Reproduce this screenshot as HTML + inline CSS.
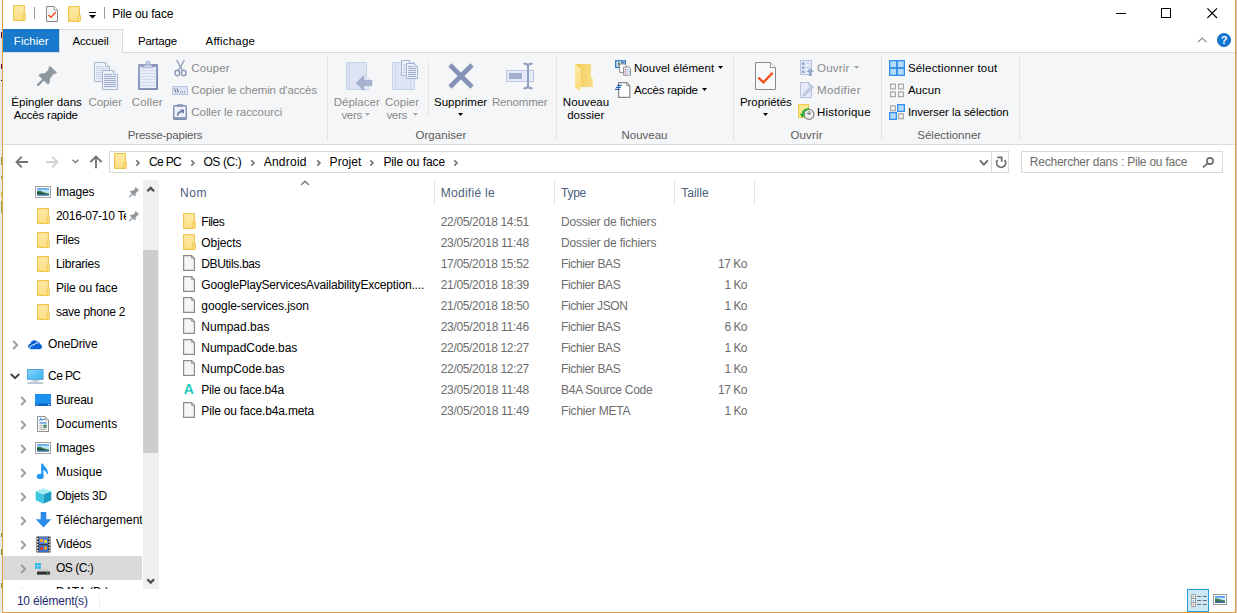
<!DOCTYPE html>
<html lang="fr"><head><meta charset="utf-8"><title>Pile ou face</title>
<style>
html,body{margin:0;padding:0;background:#fff;overflow:hidden}
body{width:1237px;height:613px;position:relative;font-family:'Liberation Sans', sans-serif;font-size:12px}
.a{position:absolute;display:block}
.t{position:absolute;white-space:pre}
</style></head><body>
<div class="a" style="left:0px;top:0px;width:2px;height:613px;background:#e9e9e9;"></div>
<div class="a" style="left:0px;top:0px;width:2px;height:29px;background:#f6f6f6;"></div>
<div class="a" style="left:1px;top:32px;width:1px;height:6px;background:#5c0f4e;"></div>
<div class="a" style="left:1px;top:64px;width:1px;height:5px;background:#5c0f4e;"></div>
<div class="a" style="left:1px;top:80px;width:1px;height:1px;background:#111;"></div>
<div class="a" style="left:1px;top:157px;width:1px;height:8px;background:#8f9a2a;"></div>
<div class="a" style="left:1px;top:176px;width:1px;height:3px;background:#b9a52e;"></div>
<div class="a" style="left:1px;top:192px;width:1px;height:5px;background:#d9c23a;"></div>
<div class="a" style="left:1px;top:201px;width:1px;height:12px;background:#9aa83a;"></div>
<div class="a" style="left:1px;top:533px;width:1px;height:4px;background:#6f8f2f;"></div>
<div class="a" style="left:1px;top:549px;width:1px;height:6px;background:#6f8f2f;"></div>
<div class="a" style="left:1px;top:583px;width:1px;height:5px;background:#8f9a2a;"></div>
<div class="a" style="left:2px;top:0px;width:1px;height:613px;background:#dfa146;"></div>
<div class="a" style="left:1235px;top:0px;width:1px;height:613px;background:#dfa146;"></div>
<div class="a" style="left:1236px;top:0px;width:1px;height:613px;background:#d3c6aa;"></div>
<div class="a" style="left:2px;top:612px;width:1234px;height:1px;background:#dfa146;"></div>
<svg class="a" style="left:13px;top:5px" width="13" height="16" viewBox="0 0 13 16"><defs><linearGradient id="fg" x1="0" y1="0" x2="0" y2="1"><stop offset="0" stop-color="#fdeaa8"/><stop offset="1" stop-color="#fbdf85"/></linearGradient></defs>
<rect x="0.600" y="0.600" width="10.800" height="14.800" fill="url(#fg)" stroke="#f0c850" stroke-width="1.200"/>
<rect x="9.900" y="8.900" width="2.500" height="6.500" rx="0.7" fill="#fbe08c" stroke="#eec548" stroke-width="1"/></svg>
<div class="a" style="left:34px;top:7px;width:1px;height:12px;background:#9a9a9a;"></div>
<svg class="a" style="left:46px;top:6px" width="12" height="16" viewBox="0 0 12 16"><path d="M0.5 0.5 H8 L11.5 4 V15.5 H0.5 Z" fill="#f6f7f9" stroke="#8a8a8a"/>
<path d="M8 0.5 V4 H11.5" fill="#fff" stroke="#8a8a8a" stroke-width="0.9"/>
<path d="M2.4 9 L5 11.2 L9.8 6.2" fill="none" stroke="#f0531c" stroke-width="1.5"/></svg>
<svg class="a" style="left:68px;top:6px" width="13" height="16" viewBox="0 0 13 16"><defs><linearGradient id="fg" x1="0" y1="0" x2="0" y2="1"><stop offset="0" stop-color="#fdeaa8"/><stop offset="1" stop-color="#fbdf85"/></linearGradient></defs>
<rect x="0.600" y="0.600" width="10.800" height="14.800" fill="url(#fg)" stroke="#f0c850" stroke-width="1.200"/>
<rect x="9.900" y="8.900" width="2.500" height="6.500" rx="0.7" fill="#fbe08c" stroke="#eec548" stroke-width="1"/></svg>
<svg class="a" style="left:88px;top:11px" width="9" height="8" viewBox="0 0 9 8"><rect x="1" y="1" width="7" height="1" fill="#000"/><path d="M1 4 H8 L4.5 7.5 Z" fill="#000"/></svg>
<div class="a" style="left:104px;top:7px;width:1px;height:12px;background:#9a9a9a;"></div>
<span class="t " style="left:112.30px;top:7px;line-height:14px;font-size:12px;color:#000;letter-spacing:-0.143px;">Pile ou face</span>
<svg class="a" style="left:1110px;top:0px" width="125" height="30" viewBox="0 0 125 30"><g stroke="#000" stroke-width="1" fill="none" shape-rendering="crispEdges">
<line x1="6" y1="13.5" x2="16" y2="13.5"/>
<rect x="51.5" y="8.5" width="9" height="9"/></g>
<path d="M97.4 8.4 L107 18 M107 8.4 L97.4 18" stroke="#000" stroke-width="1.1" fill="none"/></svg>
<div class="a" style="left:3px;top:29px;width:56px;height:23px;background:#1979ca;"></div>
<span class="t " style="left:13.80px;top:35px;line-height:12px;font-size:11.5px;color:#fff;letter-spacing:0.055px;">Fichier</span>
<div class="a" style="left:3px;top:52px;width:1232px;height:92px;background:#f5f6f7;"></div>
<div class="a" style="left:3px;top:52px;width:1232px;height:1px;background:#dadbdc;"></div>
<div class="a" style="left:3px;top:144px;width:1232px;height:1px;background:#dadbdc;"></div>
<div class="a" style="left:59px;top:29px;width:64px;height:24px;background:#f5f6f7;border:1px solid #dadbdc;box-sizing:border-box;border-bottom:none;"></div>
<span class="t " style="left:72.40px;top:35px;line-height:12px;font-size:11.5px;color:#000;letter-spacing:-0.125px;">Accueil</span>
<span class="t " style="left:137.90px;top:35px;line-height:12px;font-size:11.5px;color:#000;letter-spacing:-0.169px;">Partage</span>
<span class="t " style="left:205.50px;top:35px;line-height:12px;font-size:11.5px;color:#000;letter-spacing:0.206px;">Affichage</span>
<svg class="a" style="left:1195px;top:32px" width="40" height="18" viewBox="0 0 40 18"><path d="M3 10.200 L7.200 6 L11.400 10.200" stroke="#8c8c8c" stroke-width="1.100" fill="none"/>
<circle cx="29" cy="8" r="6.600" fill="#1177d3" stroke="#0b62b8" stroke-width="0.8"/></svg>
<span class="t " style="left:1220.70px;top:34px;line-height:12px;font-size:11px;color:#fff;letter-spacing:0.000px;font-weight:700;">?</span>
<div class="a" style="left:327px;top:55px;width:1px;height:85px;background:#e2e3e4;"></div>
<div class="a" style="left:556px;top:55px;width:1px;height:85px;background:#e2e3e4;"></div>
<div class="a" style="left:733px;top:55px;width:1px;height:85px;background:#e2e3e4;"></div>
<div class="a" style="left:881px;top:55px;width:1px;height:85px;background:#e2e3e4;"></div>
<div class="a" style="left:1019px;top:55px;width:1px;height:85px;background:#e2e3e4;"></div>
<div class="a" style="left:428px;top:62px;width:1px;height:55px;background:#e2e3e4;"></div>
<svg class="a" style="left:37.3px;top:65.6px" width="21" height="21" viewBox="0 0 21 21"><g transform="scale(1.0) translate(-7.300,-7.600)" fill="#8d979e" stroke="#8d979e" stroke-width="0.6" stroke-linejoin="round"><path d="M20.3 7.900 L27 14.400 L23.500 15.600 L20 20.300 L19.700 24.700 L18.200 25.800 L9.100 17 L10.300 15.600 L15.300 15 L19.100 11.200 L19.400 8.800 Z"/><path d="M8.400 26.500 L14 20.900" stroke-width="2.300" stroke-linecap="round" fill="none"/></g></svg>
<span class="t " style="left:11.30px;top:96px;line-height:12px;font-size:11.5px;color:#000;letter-spacing:0.021px;">Épingler dans</span>
<span class="t " style="left:13.70px;top:109px;line-height:12px;font-size:11.5px;color:#000;letter-spacing:-0.199px;">Accès rapide</span>
<svg class="a" style="left:94px;top:62px" width="24" height="28" viewBox="0 0 24 28"><path d="M0.5 0.5 H11.5 L15.5 4.5 V19.5 H0.5 Z" fill="#edf2fb" stroke="#a6b3d1"/><path d="M11.5 0.5 V4.5 H15.5" fill="#edf2fb" stroke="#a6b3d1" stroke-width="0.9"/><line x1="2" y1="4.5" x2="10" y2="4.5" stroke="#c9d3e8" stroke-width="1.1"/><line x1="2" y1="6.5" x2="14" y2="6.5" stroke="#c9d3e8" stroke-width="1.1"/><line x1="2" y1="8.5" x2="14" y2="8.5" stroke="#c9d3e8" stroke-width="1.1"/><line x1="2" y1="10.5" x2="14" y2="10.5" stroke="#c9d3e8" stroke-width="1.1"/><line x1="2" y1="12.5" x2="14" y2="12.5" stroke="#c9d3e8" stroke-width="1.1"/><line x1="2" y1="14.5" x2="14" y2="14.5" stroke="#c9d3e8" stroke-width="1.1"/><line x1="2" y1="16.5" x2="14" y2="16.5" stroke="#c9d3e8" stroke-width="1.1"/><path d="M8.5 8.5 H19.5 L23.5 12.5 V27.5 H8.5 Z" fill="#edf2fb" stroke="#a6b3d1"/><path d="M19.5 8.5 V12.5 H23.5" fill="#edf2fb" stroke="#a6b3d1" stroke-width="0.9"/><line x1="10" y1="12.5" x2="18" y2="12.5" stroke="#a3b0cd" stroke-width="1.1"/><line x1="10" y1="14.5" x2="22" y2="14.5" stroke="#a3b0cd" stroke-width="1.1"/><line x1="10" y1="16.5" x2="22" y2="16.5" stroke="#a3b0cd" stroke-width="1.1"/><line x1="10" y1="18.5" x2="22" y2="18.5" stroke="#a3b0cd" stroke-width="1.1"/><line x1="10" y1="20.5" x2="22" y2="20.5" stroke="#a3b0cd" stroke-width="1.1"/><line x1="10" y1="22.5" x2="22" y2="22.5" stroke="#a3b0cd" stroke-width="1.1"/><line x1="10" y1="24.5" x2="22" y2="24.5" stroke="#a3b0cd" stroke-width="1.1"/></svg>
<span class="t " style="left:88.40px;top:96px;line-height:12px;font-size:11.5px;color:#8a8a8a;letter-spacing:-0.048px;">Copier</span>
<svg class="a" style="left:138px;top:60px" width="20" height="30" viewBox="0 0 20 30"><defs><linearGradient id="cb" x1="0" y1="0" x2="1" y2="1"><stop offset="0" stop-color="#93a0c2"/><stop offset="1" stop-color="#7484ad"/></linearGradient></defs>
<rect x="0" y="4" width="20" height="26" rx="1.2" fill="url(#cb)"/>
<rect x="1.900" y="6.800" width="16.300" height="21.300" fill="#e9eefa"/>
<rect x="8" y="1.200" width="4" height="4" rx="1.500" fill="#c5cee3" stroke="#9ba8c8" stroke-width="0.8"/>
<path d="M4.300 7.800 L7 4.800 H13 L15.700 7.800 Z" fill="#c9d2e6" stroke="#9ba8c8" stroke-width="0.7"/>
<g stroke="#d2daed" stroke-width="1"><line x1="2" y1="10.600" x2="18" y2="10.600"/><line x1="2" y1="13.500" x2="18" y2="13.500"/><line x1="2" y1="16.500" x2="18" y2="16.500"/><line x1="2" y1="19.400" x2="18" y2="19.400"/><line x1="2" y1="22.500" x2="18" y2="22.500"/><line x1="2" y1="25.400" x2="18" y2="25.400"/></g></svg>
<span class="t " style="left:131.80px;top:96px;line-height:12px;font-size:11.5px;color:#8a8a8a;letter-spacing:0.142px;">Coller</span>
<svg class="a" style="left:174px;top:59px" width="13" height="18" viewBox="0 0 13 18"><g fill="none" stroke="#8e9bba">
<path d="M2.6 1 L8.6 11.500" stroke-width="1.4"/><path d="M10.4 1 L4.4 11.500" stroke-width="1.4"/>
<ellipse cx="3.3" cy="14" rx="2.3" ry="2.700" stroke-width="1.5"/><ellipse cx="9.700" cy="14" rx="2.3" ry="2.700" stroke-width="1.5"/></g></svg>
<span class="t " style="left:191.30px;top:62px;line-height:12px;font-size:11.5px;color:#8a8a8a;letter-spacing:0.097px;">Couper</span>
<svg class="a" style="left:172px;top:86px" width="16" height="9" viewBox="0 0 16 9"><rect x="0.5" y="0.5" width="15" height="8" fill="#dce3f3" stroke="#bac5e0"/>
<g stroke="#5c6a90" stroke-width="1" fill="none"><path d="M2.5 2.5 L4 6.5 M5 2.5 L6.5 6.5"/></g>
<g fill="#5c6a90"><rect x="8" y="5.500" width="1" height="1"/><rect x="10" y="5.500" width="1" height="1"/><rect x="12" y="5.500" width="1" height="1"/></g></svg>
<span class="t " style="left:191.30px;top:84px;line-height:12px;font-size:11.5px;color:#8a8a8a;letter-spacing:-0.105px;">Copier le chemin d&#x27;accès</span>
<svg class="a" style="left:173px;top:104px" width="14" height="16" viewBox="0 0 14 16"><rect x="0.7" y="1.700" width="12.6" height="13.600" rx="1" fill="#eef1f9" stroke="#8190b5" stroke-width="1.4"/>
<rect x="4" y="0.3" width="6" height="2.4" fill="#8190b5"/>
<rect x="0.7" y="13.200" width="12.6" height="2" fill="#8190b5"/>
<path d="M3.800 11.800 C3.800 8.400 5.600 7 8 7 L6.800 5.400 H11 V9.800 L9.600 8.600 C7.200 8.600 5.600 9.400 5.200 11.800 Z" fill="#6f7fa8"/></svg>
<span class="t " style="left:191.30px;top:106px;line-height:12px;font-size:11.5px;color:#8a8a8a;letter-spacing:-0.060px;">Coller le raccourci</span>
<span class="t " style="left:127.80px;top:129px;line-height:12px;font-size:11.5px;color:#5b5b5b;letter-spacing:-0.196px;">Presse-papiers</span>
<svg class="a" style="left:346px;top:62px" width="27" height="29" viewBox="0 0 27 29"><path d="M0.5 0.5 H20.500 V16 L22.500 16.500 V27.500 H0.5 Z" fill="#dde5f5" stroke="#c6d2ea"/>
<rect x="2.500" y="1" width="1" height="26" fill="#ccd7ee"/>
<path d="M18.500 18 L20.500 16 L22.500 16.500 V27 H18.500 Z" fill="#e9eef9"/>
<path d="M10.300 21 L17.700 13.500 V18.300 H25.800 V23.800 H17.700 V28.500 Z" fill="#a5b3d1" stroke="#8fa0c4" stroke-width="0.6"/></svg>
<span class="t " style="left:333.70px;top:96px;line-height:12px;font-size:11.5px;color:#8a8a8a;letter-spacing:0.009px;">Déplacer</span>
<span class="t " style="left:341.40px;top:109px;line-height:12px;font-size:11.5px;color:#8a8a8a;letter-spacing:-0.284px;">vers</span>
<svg class="a" style="left:392px;top:60px" width="26" height="30" viewBox="0 0 26 30"><rect x="0.5" y="2.500" width="22" height="27" fill="#dde5f5" stroke="#c9d4ec"/><rect x="3" y="3" width="1" height="26" fill="#cdd8ee"/><rect x="18" y="18" width="1" height="11" fill="#cdd8ee"/><path d="M9.5 0.5 H17.5 L20.5 3.5 V15.5 H9.5 Z" fill="#edf2fb" stroke="#a6b3d1"/><path d="M17.5 0.5 V3.5 H20.5" fill="#edf2fb" stroke="#a6b3d1" stroke-width="0.9"/><line x1="11" y1="4.5" x2="16" y2="4.5" stroke="#c9d3e8" stroke-width="1.1"/><line x1="11" y1="6.5" x2="19" y2="6.5" stroke="#c9d3e8" stroke-width="1.1"/><line x1="11" y1="8.5" x2="19" y2="8.5" stroke="#c9d3e8" stroke-width="1.1"/><line x1="11" y1="10.5" x2="19" y2="10.5" stroke="#c9d3e8" stroke-width="1.1"/><line x1="11" y1="12.5" x2="19" y2="12.5" stroke="#c9d3e8" stroke-width="1.1"/><path d="M14.5 3.5 H22.5 L25.5 6.5 V18.5 H14.5 Z" fill="#edf2fb" stroke="#a6b3d1"/><path d="M22.5 3.5 V6.5 H25.5" fill="#edf2fb" stroke="#a6b3d1" stroke-width="0.9"/><line x1="16" y1="6.5" x2="21" y2="6.5" stroke="#a3b0cd" stroke-width="1.1"/><line x1="16" y1="8.5" x2="24" y2="8.5" stroke="#a3b0cd" stroke-width="1.1"/><line x1="16" y1="10.5" x2="24" y2="10.5" stroke="#a3b0cd" stroke-width="1.1"/><line x1="16" y1="12.5" x2="24" y2="12.5" stroke="#a3b0cd" stroke-width="1.1"/><line x1="16" y1="14.5" x2="24" y2="14.5" stroke="#a3b0cd" stroke-width="1.1"/><line x1="16" y1="16.5" x2="24" y2="16.5" stroke="#a3b0cd" stroke-width="1.1"/></svg>
<span class="t " style="left:385.00px;top:96px;line-height:12px;font-size:11.5px;color:#8a8a8a;letter-spacing:0.052px;">Copier</span>
<span class="t " style="left:386.40px;top:109px;line-height:12px;font-size:11.5px;color:#8a8a8a;letter-spacing:-0.309px;">vers</span>
<svg class="a" style="left:447px;top:62px" width="28" height="28" viewBox="0 0 28 28"><path d="M3 3 L25 25 M25 3 L3 25" stroke="#8594b6" stroke-width="4.600" fill="none"/></svg>
<span class="t " style="left:434.00px;top:96px;line-height:12px;font-size:11.5px;color:#000;letter-spacing:0.015px;">Supprimer</span>
<svg class="a" style="left:505px;top:62px" width="30" height="28" viewBox="0 0 30 28"><rect x="1.500" y="8.500" width="27" height="11" fill="#e4eaf8" stroke="#bcc8e4"/>
<rect x="4" y="11" width="13" height="6" fill="#a3b0d0"/>
<path d="M18.500 1.500 C21 1.500 22.600 2 23 4 C23.400 2 25 1.500 27.500 1.500 M18.500 26.500 C21 26.500 22.600 26 23 24 C23.400 26 25 26.500 27.500 26.500 M23 3.500 V24.500" stroke="#93a1c3" stroke-width="2" fill="none"/></svg>
<span class="t " style="left:492.00px;top:96px;line-height:12px;font-size:11.5px;color:#8a8a8a;letter-spacing:-0.186px;">Renommer</span>
<span class="t " style="left:415.40px;top:129px;line-height:12px;font-size:11.5px;color:#5b5b5b;letter-spacing:0.056px;">Organiser</span>
<svg class="a" style="left:574px;top:63px" width="20" height="29" viewBox="0 0 20 29"><defs><linearGradient id="nf1" x1="0" y1="0" x2="1" y2="0"><stop offset="0" stop-color="#f2c955"/><stop offset="1" stop-color="#fadf88"/></linearGradient>
<linearGradient id="nf2" x1="0" y1="0" x2="0" y2="1"><stop offset="0" stop-color="#fdeaa8"/><stop offset="1" stop-color="#fbdb7c"/></linearGradient></defs>
<path d="M1.200 1 H17 V14.200 L19 16.100 V23.900 H6.200 Z" fill="url(#nf1)"/>
<path d="M1 1.100 L6.800 6 V23.900 L5.800 28 L1 24.200 Z" fill="url(#nf2)"/></svg>
<span class="t " style="left:562.80px;top:96px;line-height:12px;font-size:11.5px;color:#000;letter-spacing:0.065px;">Nouveau</span>
<span class="t " style="left:567.20px;top:109px;line-height:12px;font-size:11.5px;color:#000;letter-spacing:0.017px;">dossier</span>
<svg class="a" style="left:615px;top:59px" width="17" height="17" viewBox="0 0 17 17"><rect x="0.650" y="1.800" width="9.700" height="6.600" fill="#cde6f7" stroke="#2f7ec0" stroke-width="1.300"/>
<rect x="3" y="3.400" width="1.600" height="3.200" fill="#5a7a4a"/><rect x="6" y="3.200" width="3" height="1.200" fill="#2f5fa0"/>
<path d="M4.600 5 H9.800 L11.400 6.600 V13.400 H4.600 Z" fill="#fff" stroke="#8a8a8a"/>
<path d="M8.600 8 H14 L15.500 9.500 V16.200 H8.600 Z" fill="#fff" stroke="#8a8a8a"/>
<g stroke="#9cc4f0" stroke-width="0.9"><line x1="9.200" y1="10.500" x2="15" y2="10.500"/><line x1="9.200" y1="12.300" x2="15" y2="12.300"/><line x1="9.200" y1="14.100" x2="15" y2="14.100"/></g>
<line x1="10.600" y1="8.600" x2="10.600" y2="15.800" stroke="#f0a0a8" stroke-width="1"/></svg>
<span class="t " style="left:634.00px;top:62px;line-height:12px;font-size:11.5px;color:#000;letter-spacing:0.014px;">Nouvel élément</span>
<svg class="a" style="left:614px;top:82px" width="17" height="16" viewBox="0 0 17 16"><path d="M4.600 0.700 H12.800 L15.800 3.700 V15.300 H4.600 Z" fill="#fff" stroke="#8a8a8a" stroke-width="1.200"/>
<path d="M12.800 0.700 V3.700 H15.800" fill="none" stroke="#8a8a8a" stroke-width="0.9"/>
<g stroke="#1f5fb0" stroke-width="1.200"><line x1="3.200" y1="3.400" x2="7.800" y2="3.400"/><line x1="2.100" y1="5.400" x2="6.800" y2="5.400"/><line x1="1" y1="7.400" x2="5.700" y2="7.400"/></g></svg>
<span class="t " style="left:634.00px;top:84px;line-height:12px;font-size:11.5px;color:#000;letter-spacing:-0.224px;">Accès rapide</span>
<span class="t " style="left:621.60px;top:129px;line-height:12px;font-size:11.5px;color:#5b5b5b;letter-spacing:-0.035px;">Nouveau</span>
<svg class="a" style="left:755px;top:62px" width="21" height="28" viewBox="0 0 21 28"><path d="M0.5 0.5 H15.500 L20.500 5.500 V27.500 H0.5 Z" fill="#f7f8fa" stroke="#8a8a8a"/>
<path d="M15.500 0.5 V5.500 H20.500" fill="#fff" stroke="#8a8a8a" stroke-width="0.9"/>
<path d="M3.4 15.600 L8.500 20.400 L17.600 10.800" fill="none" stroke="#f2521a" stroke-width="2.300"/></svg>
<span class="t " style="left:739.90px;top:96px;line-height:12px;font-size:11.5px;color:#000;letter-spacing:-0.052px;">Propriétés</span>
<svg class="a" style="left:800px;top:60px" width="14" height="16" viewBox="0 0 14 16"><rect x="0.5" y="0.5" width="11" height="14" fill="#e3e9f6" stroke="#b5c3e0"/>
<g fill="#93a3c8"><rect x="2" y="2.500" width="2.500" height="2.500"/><rect x="2" y="6.500" width="2.500" height="2.500"/><rect x="2" y="10.500" width="2.500" height="2.500"/></g>
<g stroke="#c3cee6"><line x1="6" y1="3.500" x2="10" y2="3.500"/><line x1="6" y1="7.500" x2="10" y2="7.500"/></g>
<path d="M6.500 12 L10.300 8 L14 12 H11.800 V16 H8.800 V12 Z" fill="#98a9cd"/></svg>
<span class="t " style="left:817.10px;top:62px;line-height:12px;font-size:11.5px;color:#8a8a8a;letter-spacing:0.165px;">Ouvrir</span>
<svg class="a" style="left:800px;top:82px" width="14" height="16" viewBox="0 0 14 16"><path d="M0.5 0.5 H8.500 L11.500 3.500 V15.500 H0.5 Z" fill="#e6ebf7" stroke="#b5c3e0"/>
<path d="M8.500 0.5 V3.500 H11.500" fill="none" stroke="#b5c3e0" stroke-width="0.9"/>
<path d="M3 14 L4 11.200 L11.800 3.200 L13.600 5 L5.800 13 Z" fill="#c5cfe6" stroke="#a7b4d4" stroke-width="0.8"/></svg>
<span class="t " style="left:817.10px;top:84px;line-height:12px;font-size:11.5px;color:#8a8a8a;letter-spacing:0.387px;">Modifier</span>
<svg class="a" style="left:798px;top:104px" width="17" height="17" viewBox="0 0 17 17"><rect x="0.5" y="0.5" width="10" height="13" fill="#fce68e" stroke="#efc94c"/>
<circle cx="11" cy="10.400" r="5" fill="#ededed" stroke="#868686" stroke-width="1.200"/>
<path d="M11 7 V10.400 L13.200 8.800 M8.600 8.800 L11 10.400" stroke="#555" stroke-width="0.8" fill="none"/>
<path d="M11 5 C7.600 4.800 5 7 4.600 10" stroke="#2eaa3c" stroke-width="2.200" fill="none"/>
<path d="M1.800 9.400 L7.400 10.400 L4 13.800 Z" fill="#2eaa3c"/></svg>
<span class="t " style="left:817.10px;top:106px;line-height:12px;font-size:11.5px;color:#000;letter-spacing:0.192px;">Historique</span>
<span class="t " style="left:790.50px;top:129px;line-height:12px;font-size:11.5px;color:#5b5b5b;letter-spacing:0.131px;">Ouvrir</span>
<svg class="a" style="left:889px;top:60px" width="16" height="16" viewBox="0 0 16 16"><rect x="0.65" y="0.65" width="7.1000000000000005" height="7.1000000000000005" fill="#b7dbfc" stroke="#2f8fee" stroke-width="1.300"/><rect x="8.25" y="0.65" width="7.1000000000000005" height="7.1000000000000005" fill="#b7dbfc" stroke="#2f8fee" stroke-width="1.300"/><rect x="0.65" y="8.25" width="7.1000000000000005" height="7.1000000000000005" fill="#b7dbfc" stroke="#2f8fee" stroke-width="1.300"/><rect x="8.25" y="8.25" width="7.1000000000000005" height="7.1000000000000005" fill="#b7dbfc" stroke="#2f8fee" stroke-width="1.300"/></svg>
<span class="t " style="left:907.90px;top:62px;line-height:12px;font-size:11.5px;color:#000;letter-spacing:0.188px;">Sélectionner tout</span>
<svg class="a" style="left:889px;top:82px" width="16" height="16" viewBox="0 0 16 16"><rect x="1.6" y="2.1" width="4.8" height="4.8" fill="#f4f4f4" stroke="#a8a8a8" stroke-width="1.200"/><rect x="9.6" y="2.1" width="4.8" height="4.8" fill="#f4f4f4" stroke="#a8a8a8" stroke-width="1.200"/><rect x="1.6" y="9.9" width="4.8" height="4.8" fill="#f4f4f4" stroke="#a8a8a8" stroke-width="1.200"/><rect x="9.6" y="9.9" width="4.8" height="4.8" fill="#f4f4f4" stroke="#a8a8a8" stroke-width="1.200"/></svg>
<span class="t " style="left:907.90px;top:84px;line-height:12px;font-size:11.5px;color:#000;letter-spacing:0.038px;">Aucun</span>
<svg class="a" style="left:889px;top:104px" width="16" height="16" viewBox="0 0 16 16"><rect x="1.6" y="1.9" width="4.8" height="4.8" fill="#f4f4f4" stroke="#a8a8a8" stroke-width="1.200"/><rect x="8.65" y="0.65" width="6.7" height="6.7" fill="#b7dbfc" stroke="#2f8fee" stroke-width="1.300"/><rect x="0.65" y="8.65" width="6.7" height="6.7" fill="#b7dbfc" stroke="#2f8fee" stroke-width="1.300"/><rect x="9.6" y="9.9" width="4.8" height="4.8" fill="#f4f4f4" stroke="#a8a8a8" stroke-width="1.200"/></svg>
<span class="t " style="left:907.90px;top:106px;line-height:12px;font-size:11.5px;color:#000;letter-spacing:-0.071px;">Inverser la sélection</span>
<span class="t " style="left:917.30px;top:129px;line-height:12px;font-size:11.5px;color:#5b5b5b;letter-spacing:-0.011px;">Sélectionner</span>
<svg class="a" style="left:365px;top:113px" width="5" height="3" viewBox="0 0 5 3"><path d="M0 0 H5 L2.5 3 Z" fill="#a8a8a8"/></svg>
<svg class="a" style="left:413px;top:113px" width="5" height="3" viewBox="0 0 5 3"><path d="M0 0 H5 L2.5 3 Z" fill="#a8a8a8"/></svg>
<svg class="a" style="left:458px;top:113px" width="5" height="3" viewBox="0 0 5 3"><path d="M0 0 H5 L2.5 3 Z" fill="#000"/></svg>
<svg class="a" style="left:718px;top:66px" width="5" height="3" viewBox="0 0 5 3"><path d="M0 0 H5 L2.5 3 Z" fill="#000"/></svg>
<svg class="a" style="left:702px;top:88px" width="5" height="3" viewBox="0 0 5 3"><path d="M0 0 H5 L2.5 3 Z" fill="#000"/></svg>
<svg class="a" style="left:763px;top:113px" width="5" height="3" viewBox="0 0 5 3"><path d="M0 0 H5 L2.5 3 Z" fill="#000"/></svg>
<svg class="a" style="left:854px;top:66px" width="5" height="3" viewBox="0 0 5 3"><path d="M0 0 H5 L2.5 3 Z" fill="#a8a8a8"/></svg>
<svg class="a" style="left:15px;top:155px" width="90" height="14" viewBox="0 0 90 14"><g fill="none" stroke-width="1.900">
<path d="M13 7 H2 M6.800 1.600 L1.500 7 L6.800 12.400" stroke="#757575"/>
<path d="M31 7 H42 M37.200 1.600 L42.500 7 L37.200 12.400" stroke="#d2d2d2"/>
<path d="M57.600 4.800 L60.500 7.700 L63.400 4.800" stroke="#7d7d7d" stroke-width="1.500"/>
<path d="M81 13.300 V2 M75.400 7 L81 1.500 L86.600 7" stroke="#757575"/></g></svg>
<div class="a" style="left:109px;top:151px;width:900px;height:22px;background:#fff;border:1px solid #d9d9d9;box-sizing:border-box;"></div>
<svg class="a" style="left:114px;top:153px" width="13" height="16" viewBox="0 0 13 16"><defs><linearGradient id="fg" x1="0" y1="0" x2="0" y2="1"><stop offset="0" stop-color="#fdeaa8"/><stop offset="1" stop-color="#fbdf85"/></linearGradient></defs>
<rect x="0.600" y="0.600" width="10.800" height="14.800" fill="url(#fg)" stroke="#f0c850" stroke-width="1.200"/>
<rect x="9.900" y="8.900" width="2.500" height="6.500" rx="0.7" fill="#fbe08c" stroke="#eec548" stroke-width="1"/></svg>
<div class="a" style="left:991px;top:152px;width:1px;height:20px;background:#d9d9d9;"></div>
<svg class="a" style="left:979px;top:159px" width="10" height="8" viewBox="0 0 10 8"><path d="M0.9 1.400 L4.900 5.600 L8.900 1.400" stroke="#6a6a6a" stroke-width="1.800" fill="none"/></svg>
<svg class="a" style="left:995px;top:156px" width="12" height="13" viewBox="0 0 12 13"><path d="M9.600 4.100 A4.500 4.500 0 1 1 2.600 4.100" stroke="#6a6a6a" stroke-width="1.700" fill="none"/><path d="M2.200 1.400 H6.700 V5.800" stroke="#6a6a6a" stroke-width="1.700" fill="none"/></svg>
<div class="a" style="left:1021px;top:151px;width:202px;height:22px;background:#fff;border:1px solid #d9d9d9;box-sizing:border-box;"></div>
<span class="t " style="left:1029.80px;top:155px;line-height:14px;font-size:12px;color:#6d6d6d;letter-spacing:-0.223px;">Rechercher dans : Pile ou face</span>
<svg class="a" style="left:1202px;top:157px" width="13" height="12" viewBox="0 0 13 12"><circle cx="8" cy="4" r="3.100" stroke="#6a6a6a" stroke-width="1.600" fill="none"/><path d="M5.600 6.300 L1 10.400" stroke="#6a6a6a" stroke-width="1.800"/></svg>
<span class="t " style="left:149.00px;top:155px;line-height:14px;font-size:12px;color:#000;letter-spacing:-0.649px;">Ce PC</span>
<span class="t " style="left:203.40px;top:155px;line-height:14px;font-size:12px;color:#000;letter-spacing:-0.382px;">OS (C:)</span>
<span class="t " style="left:263.70px;top:155px;line-height:14px;font-size:12px;color:#000;letter-spacing:0.246px;">Android</span>
<span class="t " style="left:329.60px;top:155px;line-height:14px;font-size:12px;color:#000;letter-spacing:0.073px;">Projet</span>
<span class="t " style="left:383.40px;top:155px;line-height:14px;font-size:12px;color:#000;letter-spacing:-0.093px;">Pile ou face</span>
<svg class="a" style="left:134.5px;top:158.6px" width="6" height="8" viewBox="0 0 6 8"><path d="M1.300 1.400 L4 4 L1.300 6.600" stroke="#707070" stroke-width="1.500" fill="none"/></svg>
<svg class="a" style="left:189.9px;top:158.6px" width="6" height="8" viewBox="0 0 6 8"><path d="M1.300 1.400 L4 4 L1.300 6.600" stroke="#707070" stroke-width="1.500" fill="none"/></svg>
<svg class="a" style="left:249.7px;top:158.6px" width="6" height="8" viewBox="0 0 6 8"><path d="M1.300 1.400 L4 4 L1.300 6.600" stroke="#707070" stroke-width="1.500" fill="none"/></svg>
<svg class="a" style="left:316.40000000000003px;top:158.6px" width="6" height="8" viewBox="0 0 6 8"><path d="M1.300 1.400 L4 4 L1.300 6.600" stroke="#707070" stroke-width="1.500" fill="none"/></svg>
<svg class="a" style="left:369.0px;top:158.6px" width="6" height="8" viewBox="0 0 6 8"><path d="M1.300 1.400 L4 4 L1.300 6.600" stroke="#707070" stroke-width="1.500" fill="none"/></svg>
<svg class="a" style="left:453.1px;top:158.6px" width="6" height="8" viewBox="0 0 6 8"><path d="M1.300 1.400 L4 4 L1.300 6.600" stroke="#707070" stroke-width="1.500" fill="none"/></svg>
<div class="a" style="left:3px;top:556px;width:139px;height:24px;background:#d9d9d9;"></div>
<span class="t " style="left:55.90px;top:185px;line-height:14px;font-size:12px;color:#000;letter-spacing:-0.143px;">Images</span>
<svg class="a" style="left:35px;top:186px" width="16" height="12" viewBox="0 0 16 12"><rect x="0.5" y="0.5" width="15" height="11" fill="#fff" stroke="#a3a3a3"/>
<rect x="2" y="2" width="12" height="8" fill="#bfe3f7"/>
<rect x="2" y="2" width="12" height="2" fill="#6db3ee"/>
<path d="M2 5.2 C4 4.2 6 4.8 8 6 C10 7 12 7.2 14 7.4 V8.6 H2 Z" fill="#3f7d4f"/>
<path d="M2 6.4 C4 5.8 6 6.6 8 7.2 C10 7.8 12 8 14 8 V8.8 H2 Z" fill="#1f4d3c"/>
<rect x="2" y="8.6" width="12" height="1.4" fill="#5f93c7"/></svg>
<span class="t " style="left:55.90px;top:209px;line-height:14px;font-size:12px;color:#000;letter-spacing:-0.261px;">2016-07-10 Te</span>
<svg class="a" style="left:37px;top:208px" width="13" height="16" viewBox="0 0 13 16"><defs><linearGradient id="fg" x1="0" y1="0" x2="0" y2="1"><stop offset="0" stop-color="#fdeaa8"/><stop offset="1" stop-color="#fbdf85"/></linearGradient></defs>
<rect x="0.600" y="0.600" width="10.800" height="14.800" fill="url(#fg)" stroke="#f0c850" stroke-width="1.200"/>
<rect x="9.900" y="8.900" width="2.500" height="6.500" rx="0.7" fill="#fbe08c" stroke="#eec548" stroke-width="1"/></svg>
<span class="t " style="left:55.90px;top:233px;line-height:14px;font-size:12px;color:#000;letter-spacing:-0.389px;">Files</span>
<svg class="a" style="left:37px;top:232px" width="13" height="16" viewBox="0 0 13 16"><defs><linearGradient id="fg" x1="0" y1="0" x2="0" y2="1"><stop offset="0" stop-color="#fdeaa8"/><stop offset="1" stop-color="#fbdf85"/></linearGradient></defs>
<rect x="0.600" y="0.600" width="10.800" height="14.800" fill="url(#fg)" stroke="#f0c850" stroke-width="1.200"/>
<rect x="9.900" y="8.900" width="2.500" height="6.500" rx="0.7" fill="#fbe08c" stroke="#eec548" stroke-width="1"/></svg>
<span class="t " style="left:55.90px;top:257px;line-height:14px;font-size:12px;color:#000;letter-spacing:-0.248px;">Libraries</span>
<svg class="a" style="left:37px;top:256px" width="13" height="16" viewBox="0 0 13 16"><defs><linearGradient id="fg" x1="0" y1="0" x2="0" y2="1"><stop offset="0" stop-color="#fdeaa8"/><stop offset="1" stop-color="#fbdf85"/></linearGradient></defs>
<rect x="0.600" y="0.600" width="10.800" height="14.800" fill="url(#fg)" stroke="#f0c850" stroke-width="1.200"/>
<rect x="9.900" y="8.900" width="2.500" height="6.500" rx="0.7" fill="#fbe08c" stroke="#eec548" stroke-width="1"/></svg>
<span class="t " style="left:55.90px;top:281px;line-height:14px;font-size:12px;color:#000;letter-spacing:-0.085px;">Pile ou face</span>
<svg class="a" style="left:37px;top:280px" width="13" height="16" viewBox="0 0 13 16"><defs><linearGradient id="fg" x1="0" y1="0" x2="0" y2="1"><stop offset="0" stop-color="#fdeaa8"/><stop offset="1" stop-color="#fbdf85"/></linearGradient></defs>
<rect x="0.600" y="0.600" width="10.800" height="14.800" fill="url(#fg)" stroke="#f0c850" stroke-width="1.200"/>
<rect x="9.900" y="8.900" width="2.500" height="6.500" rx="0.7" fill="#fbe08c" stroke="#eec548" stroke-width="1"/></svg>
<span class="t " style="left:55.90px;top:305px;line-height:14px;font-size:12px;color:#000;letter-spacing:-0.230px;">save phone 2</span>
<svg class="a" style="left:37px;top:304px" width="13" height="16" viewBox="0 0 13 16"><defs><linearGradient id="fg" x1="0" y1="0" x2="0" y2="1"><stop offset="0" stop-color="#fdeaa8"/><stop offset="1" stop-color="#fbdf85"/></linearGradient></defs>
<rect x="0.600" y="0.600" width="10.800" height="14.800" fill="url(#fg)" stroke="#f0c850" stroke-width="1.200"/>
<rect x="9.900" y="8.900" width="2.500" height="6.500" rx="0.7" fill="#fbe08c" stroke="#eec548" stroke-width="1"/></svg>
<div class="a" style="left:126px;top:205px;width:17px;height:22px;background:#fff;"></div>
<svg class="a" style="left:129.2px;top:187px" width="11" height="11" viewBox="0 0 11 11"><g transform="scale(0.515) translate(-7.300,-7.600)" fill="#8f989e" stroke="#8f989e" stroke-width="0.6" stroke-linejoin="round"><path d="M20.3 7.900 L27 14.400 L23.500 15.600 L20 20.300 L19.700 24.700 L18.200 25.800 L9.100 17 L10.300 15.600 L15.300 15 L19.100 11.200 L19.400 8.800 Z"/><path d="M8.400 26.500 L14 20.900" stroke-width="2.300" stroke-linecap="round" fill="none"/></g></svg>
<svg class="a" style="left:129.2px;top:211px" width="11" height="11" viewBox="0 0 11 11"><g transform="scale(0.515) translate(-7.300,-7.600)" fill="#8f989e" stroke="#8f989e" stroke-width="0.6" stroke-linejoin="round"><path d="M20.3 7.900 L27 14.400 L23.500 15.600 L20 20.300 L19.700 24.700 L18.200 25.800 L9.100 17 L10.300 15.600 L15.300 15 L19.100 11.200 L19.400 8.800 Z"/><path d="M8.400 26.500 L14 20.900" stroke-width="2.300" stroke-linecap="round" fill="none"/></g></svg>
<svg class="a" style="left:11.5px;top:339.8px" width="7" height="10" viewBox="0 0 7 10"><path d="M1.2 1 L5.2 5 L1.2 9" stroke="#9a9a9a" stroke-width="1.8" fill="none"/></svg>
<svg class="a" style="left:27px;top:339px" width="17" height="11" viewBox="0 0 17 11"><path d="M3.800 10.300 a3 3 0 0 1 -0.4 -5.900 a4 4 0 0 1 6.400 -2.200 a4.300 4.300 0 0 1 3.600 3 a2.700 2.700 0 0 1 -0.2 5.100 Z" fill="#0a64d8"/><path d="M2.600 9.600 C3 7 5 5.600 7.200 5.800 C8 4.200 9.800 3.400 11.600 4.200" fill="none" stroke="#fff" stroke-width="1"/></svg>
<span class="t " style="left:48.10px;top:337px;line-height:14px;font-size:12px;color:#000;letter-spacing:-0.173px;">OneDrive</span>
<svg class="a" style="left:9.8px;top:373px" width="10" height="7" viewBox="0 0 10 7"><path d="M0.8 1 L5 5.200 L9.200 1" stroke="#404040" stroke-width="1.9" fill="none"/></svg>
<svg class="a" style="left:27px;top:369px" width="17" height="15" viewBox="0 0 17 15"><defs><linearGradient id="pc" x1="0" y1="0" x2="1" y2="1"><stop offset="0" stop-color="#8fd6fa"/><stop offset="0.5" stop-color="#5cc3f7"/><stop offset="1" stop-color="#3db3f3"/></linearGradient></defs>
<rect x="0.5" y="0.5" width="15.500" height="9.800" fill="url(#pc)" stroke="#4d9fd6"/>
<rect x="6.500" y="10.800" width="3.500" height="1.400" fill="#b5c4d2"/><rect x="4" y="11.600" width="8.500" height="0.9" fill="#b5c4d2"/><rect x="0.3" y="13.400" width="16" height="1.300" fill="#9db0c4"/></svg>
<span class="t " style="left:48.10px;top:369px;line-height:14px;font-size:12px;color:#000;letter-spacing:-0.609px;">Ce PC</span>
<span class="t " style="left:56.00px;top:393px;line-height:14px;font-size:12px;color:#000;letter-spacing:-0.301px;">Bureau</span>
<svg class="a" style="left:19.8px;top:395.8px" width="7" height="10" viewBox="0 0 7 10"><path d="M1.2 1 L5.2 5 L1.2 9" stroke="#9a9a9a" stroke-width="1.8" fill="none"/></svg>
<span class="t " style="left:56.00px;top:417px;line-height:14px;font-size:12px;color:#000;letter-spacing:0.055px;">Documents</span>
<svg class="a" style="left:19.8px;top:419.8px" width="7" height="10" viewBox="0 0 7 10"><path d="M1.2 1 L5.2 5 L1.2 9" stroke="#9a9a9a" stroke-width="1.8" fill="none"/></svg>
<span class="t " style="left:56.00px;top:441px;line-height:14px;font-size:12px;color:#000;letter-spacing:-0.143px;">Images</span>
<svg class="a" style="left:19.8px;top:443.8px" width="7" height="10" viewBox="0 0 7 10"><path d="M1.2 1 L5.2 5 L1.2 9" stroke="#9a9a9a" stroke-width="1.8" fill="none"/></svg>
<span class="t " style="left:56.00px;top:465px;line-height:14px;font-size:12px;color:#000;letter-spacing:0.149px;">Musique</span>
<svg class="a" style="left:19.8px;top:467.8px" width="7" height="10" viewBox="0 0 7 10"><path d="M1.2 1 L5.2 5 L1.2 9" stroke="#9a9a9a" stroke-width="1.8" fill="none"/></svg>
<span class="t " style="left:56.00px;top:489px;line-height:14px;font-size:12px;color:#000;letter-spacing:-0.273px;">Objets 3D</span>
<svg class="a" style="left:19.8px;top:491.8px" width="7" height="10" viewBox="0 0 7 10"><path d="M1.2 1 L5.2 5 L1.2 9" stroke="#9a9a9a" stroke-width="1.8" fill="none"/></svg>
<span class="t " style="left:56.00px;top:513px;line-height:14px;font-size:12px;color:#000;letter-spacing:-0.001px;">Téléchargements</span>
<svg class="a" style="left:19.8px;top:515.8px" width="7" height="10" viewBox="0 0 7 10"><path d="M1.2 1 L5.2 5 L1.2 9" stroke="#9a9a9a" stroke-width="1.8" fill="none"/></svg>
<span class="t " style="left:56.00px;top:537px;line-height:14px;font-size:12px;color:#000;letter-spacing:-0.214px;">Vidéos</span>
<svg class="a" style="left:19.8px;top:539.8px" width="7" height="10" viewBox="0 0 7 10"><path d="M1.2 1 L5.2 5 L1.2 9" stroke="#9a9a9a" stroke-width="1.8" fill="none"/></svg>
<span class="t " style="left:56.00px;top:561px;line-height:14px;font-size:12px;color:#000;letter-spacing:-0.482px;">OS (C:)</span>
<svg class="a" style="left:19.8px;top:563.8px" width="7" height="10" viewBox="0 0 7 10"><path d="M1.2 1 L5.2 5 L1.2 9" stroke="#9a9a9a" stroke-width="1.8" fill="none"/></svg>
<span class="t " style="left:56.00px;top:585px;line-height:14px;font-size:12px;color:#000;letter-spacing:0.000px;">DATA (D:)</span>
<svg class="a" style="left:19.8px;top:587.8px" width="7" height="10" viewBox="0 0 7 10"><path d="M1.2 1 L5.2 5 L1.2 9" stroke="#9a9a9a" stroke-width="1.8" fill="none"/></svg>
<svg class="a" style="left:35px;top:394px" width="16" height="12" viewBox="0 0 16 12"><rect x="0" y="0" width="16" height="12" fill="#1e90f0"/><rect x="0" y="9.500" width="16" height="2.500" fill="#0c5fbd"/><rect x="1.500" y="10.300" width="1" height="1" fill="#fff"/><rect x="13" y="10.300" width="2" height="1" fill="#cfe4fa"/></svg>
<svg class="a" style="left:37px;top:416px" width="12" height="16" viewBox="0 0 12 16"><path d="M0.5 0.5 H8 L11.500 4 V15.500 H0.5 Z" fill="#fff" stroke="#8f8f8f"/><path d="M8 0.5 V4 H11.500" fill="none" stroke="#8f8f8f" stroke-width="0.9"/>
<path d="M2.500 5 L4 2.200 L5.200 5" stroke="#2f7bd6" stroke-width="1" fill="none"/><rect x="5.800" y="3" width="2" height="1" fill="#2f7bd6"/>
<rect x="2.300" y="6.300" width="7.500" height="1.200" fill="#2f7bd6"/>
<g stroke="#8f8f8f" stroke-width="0.9"><line x1="2.300" y1="9.300" x2="5.500" y2="9.300"/><line x1="2.300" y1="11.300" x2="5.500" y2="11.300"/><line x1="2.300" y1="13.300" x2="9.500" y2="13.300"/></g>
<rect x="6.300" y="8.600" width="3.400" height="3.400" fill="#4f8f6a"/></svg>
<svg class="a" style="left:35px;top:442px" width="16" height="12" viewBox="0 0 16 12"><rect x="0.5" y="0.5" width="15" height="11" fill="#fff" stroke="#a3a3a3"/>
<rect x="2" y="2" width="12" height="8" fill="#bfe3f7"/>
<rect x="2" y="2" width="12" height="2" fill="#6db3ee"/>
<path d="M2 5.2 C4 4.2 6 4.8 8 6 C10 7 12 7.2 14 7.4 V8.6 H2 Z" fill="#3f7d4f"/>
<path d="M2 6.4 C4 5.8 6 6.6 8 7.2 C10 7.8 12 8 14 8 V8.8 H2 Z" fill="#1f4d3c"/>
<rect x="2" y="8.6" width="12" height="1.4" fill="#5f93c7"/></svg>
<svg class="a" style="left:36px;top:463px" width="14" height="17" viewBox="0 0 14 17"><path d="M6.300 0.8 V13" stroke="#2196f3" stroke-width="2.200" fill="none"/><path d="M6.300 0.8 C7.500 4 12.500 5.500 11.200 11 C10.800 8 8.800 7 6.300 6.200 Z" fill="#2196f3" stroke="#2196f3" stroke-width="0.8"/><ellipse cx="4.200" cy="13.400" rx="3.500" ry="2.600" fill="#2196f3"/></svg>
<svg class="a" style="left:35px;top:488px" width="17" height="16" viewBox="0 0 17 16"><path d="M8.500 0.3 L16.300 3.300 L8.500 6.600 L0.700 3.300 Z" fill="#a5ecf5"/><path d="M0.700 3.300 L8.500 6.600 V15.700 L0.700 12.200 Z" fill="#3cc6df"/><path d="M16.300 3.300 L8.500 6.600 V15.700 L16.300 12.200 Z" fill="#1b9ec4"/></svg>
<svg class="a" style="left:35px;top:512px" width="17" height="16" viewBox="0 0 17 16"><path d="M5.700 0 H11.300 V7.200 H16.300 L8.500 15.600 L0.700 7.200 H5.700 Z" fill="#2b8bea"/></svg>
<svg class="a" style="left:36px;top:536px" width="15" height="17" viewBox="0 0 15 17"><rect x="0.5" y="0.5" width="14" height="16" fill="#3a3a3a"/>
<rect x="3" y="1" width="9" height="7" fill="#4f7fd8"/><rect x="3" y="9" width="9" height="7" fill="#3f6fc8"/>
<rect x="4" y="3" width="3" height="3" fill="#f0a030"/><rect x="8" y="4" width="3" height="3" fill="#e0d040"/><rect x="4" y="11" width="3" height="3" fill="#d04040"/><rect x="8" y="10.500" width="3" height="3" fill="#f0a030"/>
<g fill="#e8e8e8"><rect x="1" y="2" width="1.300" height="1.500"/><rect x="1" y="5" width="1.300" height="1.500"/><rect x="1" y="8" width="1.300" height="1.500"/><rect x="1" y="11" width="1.300" height="1.500"/><rect x="1" y="14" width="1.300" height="1.500"/>
<rect x="12.700" y="2" width="1.300" height="1.500"/><rect x="12.700" y="5" width="1.300" height="1.500"/><rect x="12.700" y="8" width="1.300" height="1.500"/><rect x="12.700" y="11" width="1.300" height="1.500"/><rect x="12.700" y="14" width="1.300" height="1.500"/></g></svg>
<svg class="a" style="left:35px;top:563px" width="16" height="12" viewBox="0 0 16 12"><g fill="#19b7ea"><rect x="0" y="0" width="2.600" height="2.600"/><rect x="3.200" y="0" width="2.600" height="2.600"/><rect x="0" y="3.200" width="2.600" height="2.600"/><rect x="3.200" y="3.200" width="2.600" height="2.600"/></g><path d="M3.500 6.300 H13 L15 9 V11.500 H2 V9 Z" fill="#c9c9c9"/><rect x="2" y="8.600" width="13" height="3" fill="#2f2f2f"/><rect x="12" y="9.600" width="1.500" height="1" fill="#4cff4c"/></svg>
<div class="a" style="left:142px;top:180px;width:1px;height:409px;background:#fff;"></div>
<div class="a" style="left:143px;top:180px;width:16px;height:409px;background:#f0f0f0;"></div>
<div class="a" style="left:143px;top:250px;width:15px;height:203px;background:#cdcdcd;"></div>
<svg class="a" style="left:143px;top:180px" width="16" height="409" viewBox="0 0 16 409"><path d="M4.300 11.300 L7.700 7.900 L11.100 11.300" stroke="#4d4d4d" stroke-width="2.200" fill="none"/>
<path d="M4.300 399.200 L7.700 402.600 L11.100 399.200" stroke="#4d4d4d" stroke-width="2.200" fill="none"/></svg>
<span class="t " style="left:180.00px;top:186px;line-height:14px;font-size:12px;color:#4c607a;letter-spacing:0.519px;">Nom</span>
<span class="t " style="left:440.70px;top:186px;line-height:14px;font-size:12px;color:#4c607a;letter-spacing:0.284px;">Modifié le</span>
<span class="t " style="left:561.00px;top:186px;line-height:14px;font-size:12px;color:#4c607a;letter-spacing:-0.254px;">Type</span>
<span class="t " style="left:681.20px;top:186px;line-height:14px;font-size:12px;color:#4c607a;letter-spacing:0.007px;">Taille</span>
<div class="a" style="left:434px;top:180px;width:1px;height:25px;background:#e5e5e5;"></div>
<div class="a" style="left:554px;top:180px;width:1px;height:25px;background:#e5e5e5;"></div>
<div class="a" style="left:674px;top:180px;width:1px;height:25px;background:#e5e5e5;"></div>
<div class="a" style="left:754px;top:180px;width:1px;height:25px;background:#e5e5e5;"></div>
<svg class="a" style="left:300px;top:180px" width="10" height="6" viewBox="0 0 10 6"><path d="M1 5 L5 1.200 L9 5" stroke="#707070" stroke-width="1.200" fill="none"/></svg>
<svg class="a" style="left:183px;top:213px" width="13" height="16" viewBox="0 0 13 16"><defs><linearGradient id="fg" x1="0" y1="0" x2="0" y2="1"><stop offset="0" stop-color="#fdeaa8"/><stop offset="1" stop-color="#fbdf85"/></linearGradient></defs>
<rect x="0.600" y="0.600" width="10.800" height="14.800" fill="url(#fg)" stroke="#f0c850" stroke-width="1.200"/>
<rect x="9.900" y="8.900" width="2.500" height="6.500" rx="0.7" fill="#fbe08c" stroke="#eec548" stroke-width="1"/></svg>
<span class="t " style="left:201.30px;top:215px;line-height:14px;font-size:12px;color:#000;letter-spacing:-0.489px;">Files</span>
<span class="t " style="left:440.70px;top:215px;line-height:14px;font-size:12px;color:#6d6d6d;letter-spacing:-0.326px;">22/05/2018 14:51</span>
<span class="t " style="left:561.00px;top:215px;line-height:14px;font-size:12px;color:#6d6d6d;letter-spacing:-0.184px;">Dossier de fichiers</span>
<svg class="a" style="left:183px;top:234px" width="13" height="16" viewBox="0 0 13 16"><defs><linearGradient id="fg" x1="0" y1="0" x2="0" y2="1"><stop offset="0" stop-color="#fdeaa8"/><stop offset="1" stop-color="#fbdf85"/></linearGradient></defs>
<rect x="0.600" y="0.600" width="10.800" height="14.800" fill="url(#fg)" stroke="#f0c850" stroke-width="1.200"/>
<rect x="9.900" y="8.900" width="2.500" height="6.500" rx="0.7" fill="#fbe08c" stroke="#eec548" stroke-width="1"/></svg>
<span class="t " style="left:201.30px;top:236px;line-height:14px;font-size:12px;color:#000;letter-spacing:-0.084px;">Objects</span>
<span class="t " style="left:440.70px;top:236px;line-height:14px;font-size:12px;color:#6d6d6d;letter-spacing:-0.271px;">23/05/2018 11:48</span>
<span class="t " style="left:561.00px;top:236px;line-height:14px;font-size:12px;color:#6d6d6d;letter-spacing:-0.184px;">Dossier de fichiers</span>
<svg class="a" style="left:183px;top:255px" width="12" height="16" viewBox="0 0 12 16"><path d="M0.600 0.600 H8.600 L11.400 3.400 V15.400 H0.600 Z" fill="#f5f6f8" stroke="#8c8c8c" stroke-width="1.200"/>
<path d="M8.600 0.800 V3.400 H11.200" fill="none" stroke="#8c8c8c" stroke-width="0.9"/></svg>
<span class="t " style="left:201.30px;top:257px;line-height:14px;font-size:12px;color:#000;letter-spacing:-0.344px;">DBUtils.bas</span>
<span class="t " style="left:440.70px;top:257px;line-height:14px;font-size:12px;color:#6d6d6d;letter-spacing:-0.326px;">17/05/2018 15:52</span>
<span class="t " style="left:561.00px;top:257px;line-height:14px;font-size:12px;color:#6d6d6d;letter-spacing:-0.360px;">Fichier BAS</span>
<span class="t " style="left:718.00px;top:257px;line-height:14px;font-size:12px;color:#6d6d6d;letter-spacing:-0.472px;">17 Ko</span>
<svg class="a" style="left:183px;top:276px" width="12" height="16" viewBox="0 0 12 16"><path d="M0.600 0.600 H8.600 L11.400 3.400 V15.400 H0.600 Z" fill="#f5f6f8" stroke="#8c8c8c" stroke-width="1.200"/>
<path d="M8.600 0.800 V3.400 H11.200" fill="none" stroke="#8c8c8c" stroke-width="0.9"/></svg>
<span class="t " style="left:201.30px;top:278px;line-height:14px;font-size:12px;color:#000;letter-spacing:-0.181px;">GooglePlayServicesAvailabilityException....</span>
<span class="t " style="left:440.70px;top:278px;line-height:14px;font-size:12px;color:#6d6d6d;letter-spacing:-0.326px;">21/05/2018 18:39</span>
<span class="t " style="left:561.00px;top:278px;line-height:14px;font-size:12px;color:#6d6d6d;letter-spacing:-0.360px;">Fichier BAS</span>
<span class="t " style="left:724.50px;top:278px;line-height:14px;font-size:12px;color:#6d6d6d;letter-spacing:-0.547px;">1 Ko</span>
<svg class="a" style="left:183px;top:297px" width="12" height="16" viewBox="0 0 12 16"><path d="M0.600 0.600 H8.600 L11.400 3.400 V15.400 H0.600 Z" fill="#f5f6f8" stroke="#8c8c8c" stroke-width="1.200"/>
<path d="M8.600 0.800 V3.400 H11.200" fill="none" stroke="#8c8c8c" stroke-width="0.9"/></svg>
<span class="t " style="left:201.30px;top:299px;line-height:14px;font-size:12px;color:#000;letter-spacing:-0.090px;">google-services.json</span>
<span class="t " style="left:440.70px;top:299px;line-height:14px;font-size:12px;color:#6d6d6d;letter-spacing:-0.326px;">21/05/2018 18:50</span>
<span class="t " style="left:561.00px;top:299px;line-height:14px;font-size:12px;color:#6d6d6d;letter-spacing:-0.412px;">Fichier JSON</span>
<span class="t " style="left:724.50px;top:299px;line-height:14px;font-size:12px;color:#6d6d6d;letter-spacing:-0.547px;">1 Ko</span>
<svg class="a" style="left:183px;top:318px" width="12" height="16" viewBox="0 0 12 16"><path d="M0.600 0.600 H8.600 L11.400 3.400 V15.400 H0.600 Z" fill="#f5f6f8" stroke="#8c8c8c" stroke-width="1.200"/>
<path d="M8.600 0.800 V3.400 H11.200" fill="none" stroke="#8c8c8c" stroke-width="0.9"/></svg>
<span class="t " style="left:201.30px;top:320px;line-height:14px;font-size:12px;color:#000;letter-spacing:0.005px;">Numpad.bas</span>
<span class="t " style="left:440.70px;top:320px;line-height:14px;font-size:12px;color:#6d6d6d;letter-spacing:-0.271px;">23/05/2018 11:46</span>
<span class="t " style="left:561.00px;top:320px;line-height:14px;font-size:12px;color:#6d6d6d;letter-spacing:-0.360px;">Fichier BAS</span>
<span class="t " style="left:724.50px;top:320px;line-height:14px;font-size:12px;color:#6d6d6d;letter-spacing:-0.547px;">6 Ko</span>
<svg class="a" style="left:183px;top:339px" width="12" height="16" viewBox="0 0 12 16"><path d="M0.600 0.600 H8.600 L11.400 3.400 V15.400 H0.600 Z" fill="#f5f6f8" stroke="#8c8c8c" stroke-width="1.200"/>
<path d="M8.600 0.800 V3.400 H11.200" fill="none" stroke="#8c8c8c" stroke-width="0.9"/></svg>
<span class="t " style="left:201.30px;top:341px;line-height:14px;font-size:12px;color:#000;letter-spacing:-0.060px;">NumpadCode.bas</span>
<span class="t " style="left:440.70px;top:341px;line-height:14px;font-size:12px;color:#6d6d6d;letter-spacing:-0.326px;">22/05/2018 12:27</span>
<span class="t " style="left:561.00px;top:341px;line-height:14px;font-size:12px;color:#6d6d6d;letter-spacing:-0.360px;">Fichier BAS</span>
<span class="t " style="left:724.50px;top:341px;line-height:14px;font-size:12px;color:#6d6d6d;letter-spacing:-0.547px;">1 Ko</span>
<svg class="a" style="left:183px;top:360px" width="12" height="16" viewBox="0 0 12 16"><path d="M0.600 0.600 H8.600 L11.400 3.400 V15.400 H0.600 Z" fill="#f5f6f8" stroke="#8c8c8c" stroke-width="1.200"/>
<path d="M8.600 0.800 V3.400 H11.200" fill="none" stroke="#8c8c8c" stroke-width="0.9"/></svg>
<span class="t " style="left:201.30px;top:362px;line-height:14px;font-size:12px;color:#000;letter-spacing:-0.024px;">NumpCode.bas</span>
<span class="t " style="left:440.70px;top:362px;line-height:14px;font-size:12px;color:#6d6d6d;letter-spacing:-0.326px;">22/05/2018 12:27</span>
<span class="t " style="left:561.00px;top:362px;line-height:14px;font-size:12px;color:#6d6d6d;letter-spacing:-0.360px;">Fichier BAS</span>
<span class="t " style="left:724.50px;top:362px;line-height:14px;font-size:12px;color:#6d6d6d;letter-spacing:-0.547px;">1 Ko</span>
<span class="t " style="left:183.70px;top:381px;line-height:16px;font-size:14px;color:#1cc8b8;letter-spacing:0.000px;font-weight:700;">A</span>
<span class="t " style="left:201.30px;top:383px;line-height:14px;font-size:12px;color:#000;letter-spacing:-0.216px;">Pile ou face.b4a</span>
<span class="t " style="left:440.70px;top:383px;line-height:14px;font-size:12px;color:#6d6d6d;letter-spacing:-0.271px;">23/05/2018 11:48</span>
<span class="t " style="left:561.00px;top:383px;line-height:14px;font-size:12px;color:#6d6d6d;letter-spacing:-0.267px;">B4A Source Code</span>
<span class="t " style="left:718.00px;top:383px;line-height:14px;font-size:12px;color:#6d6d6d;letter-spacing:-0.472px;">17 Ko</span>
<svg class="a" style="left:183px;top:402px" width="12" height="16" viewBox="0 0 12 16"><path d="M0.600 0.600 H8.600 L11.400 3.400 V15.400 H0.600 Z" fill="#f5f6f8" stroke="#8c8c8c" stroke-width="1.200"/>
<path d="M8.600 0.800 V3.400 H11.200" fill="none" stroke="#8c8c8c" stroke-width="0.9"/></svg>
<span class="t " style="left:201.30px;top:404px;line-height:14px;font-size:12px;color:#000;letter-spacing:-0.161px;">Pile ou face.b4a.meta</span>
<span class="t " style="left:440.70px;top:404px;line-height:14px;font-size:12px;color:#6d6d6d;letter-spacing:-0.271px;">23/05/2018 11:49</span>
<span class="t " style="left:561.00px;top:404px;line-height:14px;font-size:12px;color:#6d6d6d;letter-spacing:-0.200px;">Fichier META</span>
<span class="t " style="left:724.50px;top:404px;line-height:14px;font-size:12px;color:#6d6d6d;letter-spacing:-0.547px;">1 Ko</span>
<div class="a" style="left:3px;top:589px;width:1232px;height:23px;background:#fff;"></div>
<span class="t " style="left:16.90px;top:594px;line-height:14px;font-size:12px;color:#1e2a6e;letter-spacing:-0.198px;">10 élément(s)</span>
<div class="a" style="left:99px;top:593px;width:1px;height:15px;background:#f0f0f0;"></div>
<div class="a" style="left:1187px;top:589px;width:22px;height:23px;background:#cce8f6;border:1px solid #26a0da;box-sizing:border-box;"></div>
<svg class="a" style="left:1190px;top:592px" width="18" height="17" viewBox="0 0 18 17"><g fill="#fff" stroke="#8a8a8a" stroke-width="0.8"><rect x="1.800" y="2.700" width="3.700" height="4"/><rect x="1.800" y="6.700" width="3.700" height="4"/><rect x="1.800" y="10.700" width="3.700" height="4"/></g>
<rect x="3.100" y="4.200" width="1.100" height="1.100" fill="#3a7a3a"/><rect x="3.100" y="8.200" width="1.100" height="1.100" fill="#3a7ae0"/><rect x="3.100" y="12.200" width="1.100" height="1.100" fill="#e03030"/>
<g fill="#6e6e6e"><rect x="7.100" y="4" width="4" height="1"/><rect x="12.700" y="4" width="4" height="1"/><rect x="7.100" y="8" width="4" height="1"/><rect x="12.700" y="8" width="4" height="1"/><rect x="7.100" y="12" width="4" height="1"/><rect x="12.700" y="12" width="4" height="1"/></g></svg>
<svg class="a" style="left:1213px;top:594px" width="14" height="11" viewBox="0 0 14 11"><rect x="0.5" y="0.5" width="13" height="10" fill="#fff" stroke="#9a9a9a"/>
<rect x="2" y="2" width="10" height="7" fill="#cfeafa"/><rect x="2" y="2" width="10" height="1.800" fill="#5b9bf0"/>
<path d="M2 4.600 C4 4 6 4.800 8 5.600 C9.500 6.200 11 6.400 12 6.600 V8 H2 Z" fill="#3f7d4f"/><rect x="2" y="7.600" width="10" height="1.400" fill="#3a69a8"/></svg>
<div class="a" style="left:2px;top:612px;width:1234px;height:1px;background:#dfa146;"></div>
</body></html>
